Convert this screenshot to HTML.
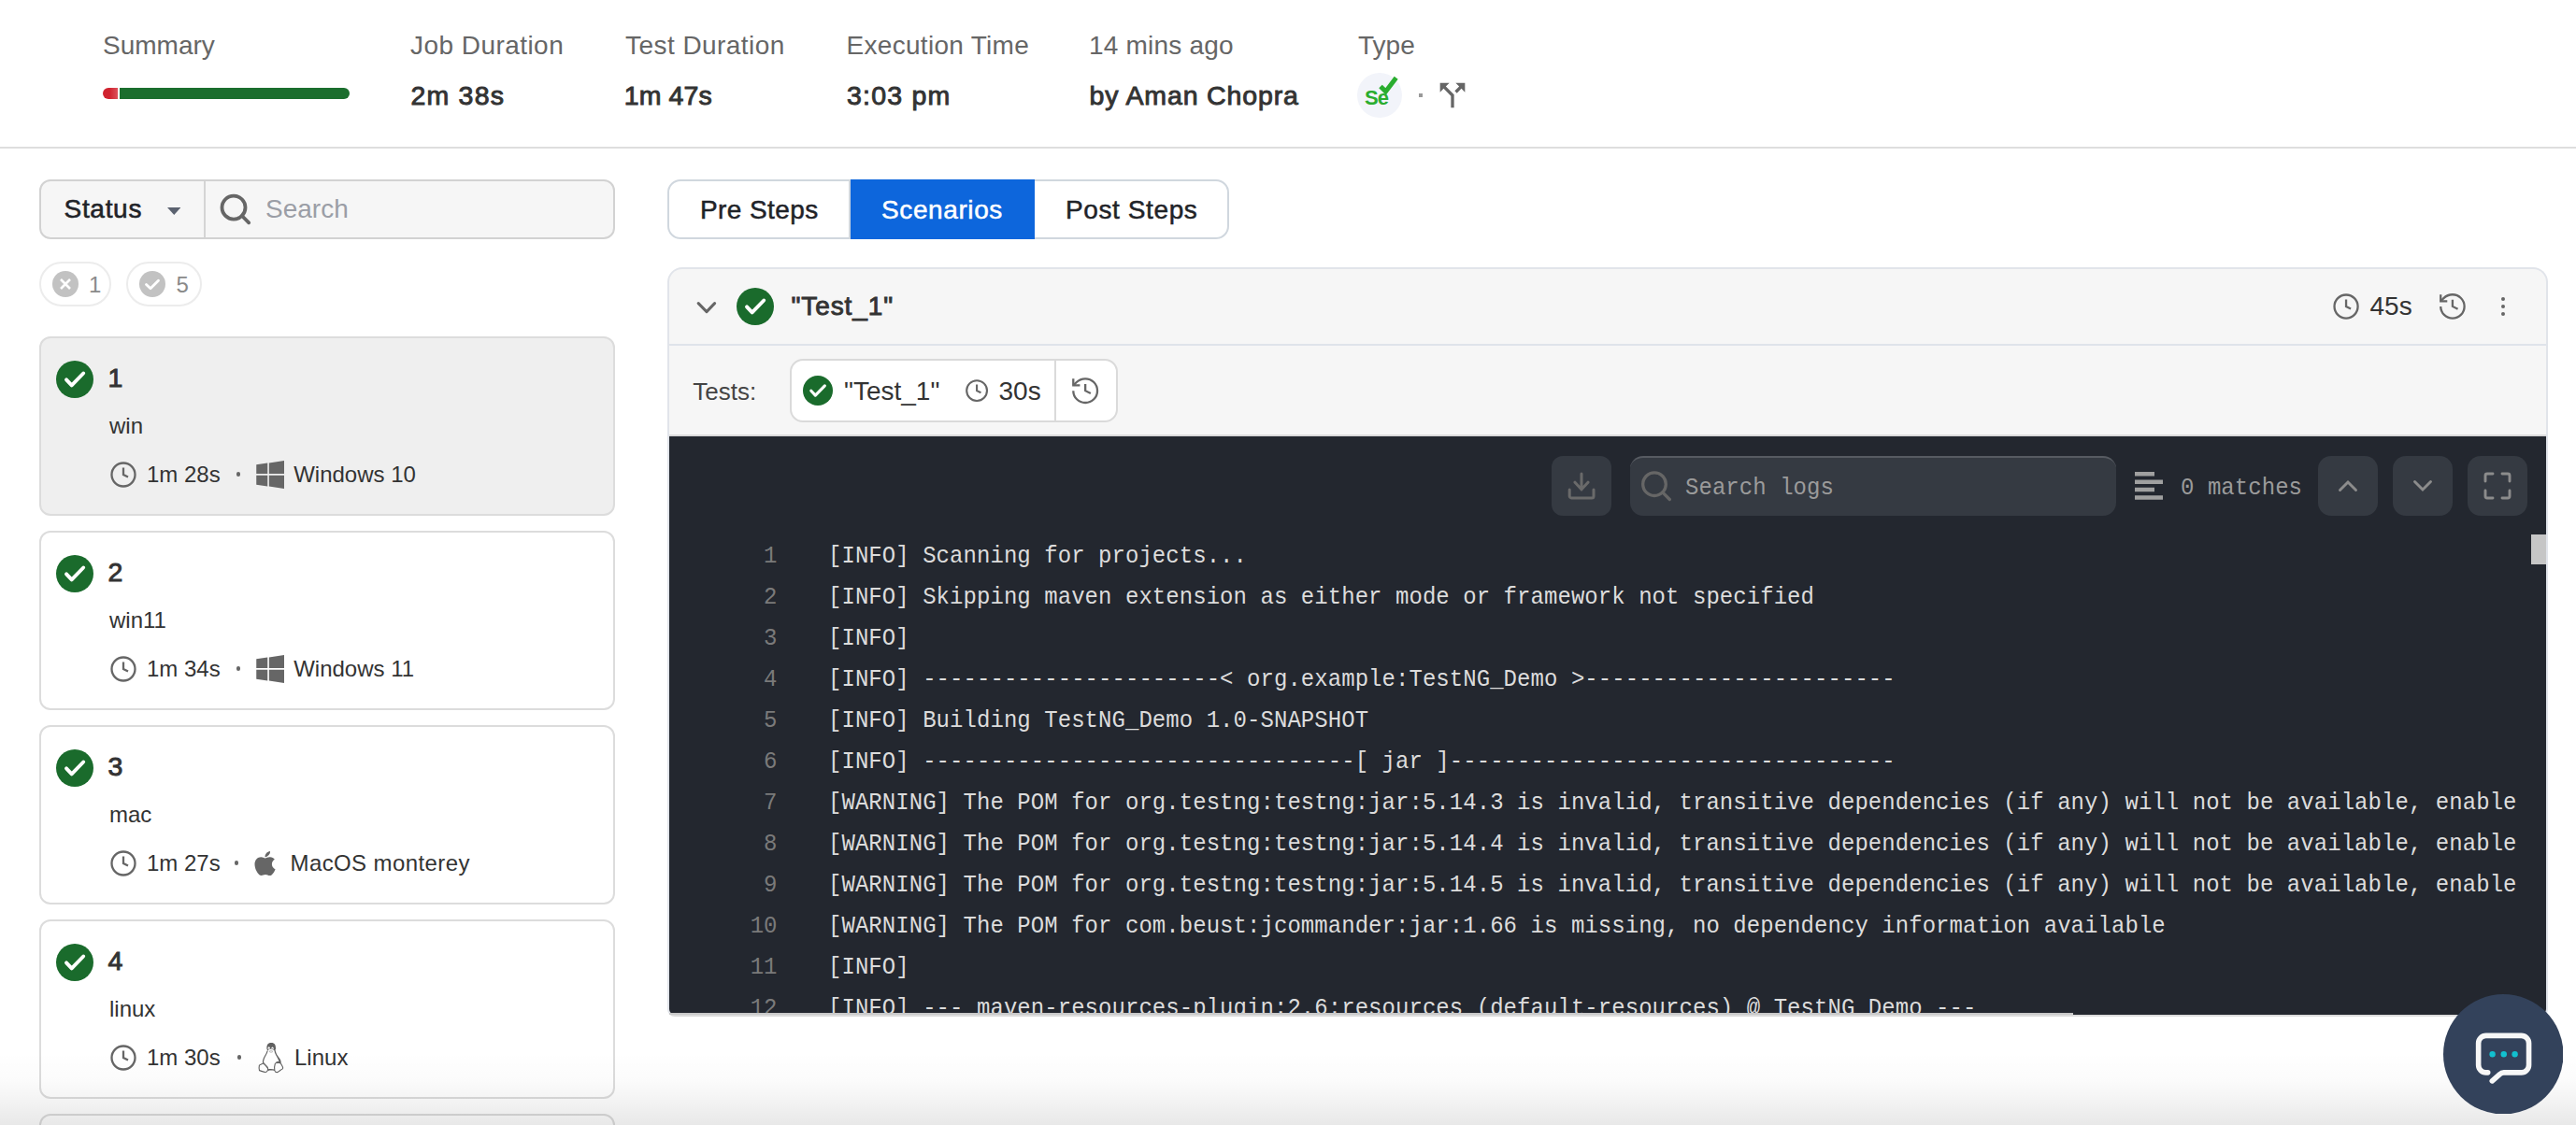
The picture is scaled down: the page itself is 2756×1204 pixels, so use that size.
<!DOCTYPE html><html><head><meta charset="utf-8"><style>html,body{margin:0;padding:0;background:#fff;width:2756px;height:1204px;overflow:hidden;position:relative;font-family:'Liberation Sans',sans-serif}</style></head><body>
<div style="position:absolute;left:110.00px;top:34.50px;font:400 28px/28px 'Liberation Sans', sans-serif;color:#666;white-space:pre;">Summary</div>
<div style="position:absolute;left:110px;top:94px;width:16px;height:12px;box-sizing:border-box;background:linear-gradient(to right,#d0232f 45%,#dc525c);border-radius:6px 0 0 6px"></div>
<div style="position:absolute;left:128px;top:94px;width:246px;height:12px;box-sizing:border-box;background:#1b6e2e;border-radius:0 6px 6px 0"></div>
<div style="position:absolute;left:439.00px;top:34.50px;font:400 28px/28px 'Liberation Sans', sans-serif;color:#666;white-space:pre;letter-spacing:0.45px">Job Duration</div>
<div style="position:absolute;left:439.50px;top:88.07px;font:400 28.5px/28.5px 'Liberation Sans', sans-serif;color:#333;white-space:pre;letter-spacing:1.2px;-webkit-text-stroke:0.95px #333">2m 38s</div>
<div style="position:absolute;left:669.00px;top:34.50px;font:400 28px/28px 'Liberation Sans', sans-serif;color:#666;white-space:pre;letter-spacing:0.45px">Test Duration</div>
<div style="position:absolute;left:667.80px;top:88.07px;font:400 28.5px/28.5px 'Liberation Sans', sans-serif;color:#333;white-space:pre;letter-spacing:0.1px;-webkit-text-stroke:0.95px #333">1m 47s</div>
<div style="position:absolute;left:905.50px;top:34.50px;font:400 28px/28px 'Liberation Sans', sans-serif;color:#666;white-space:pre;letter-spacing:0.3px">Execution Time</div>
<div style="position:absolute;left:906.00px;top:88.07px;font:400 28.5px/28.5px 'Liberation Sans', sans-serif;color:#333;white-space:pre;letter-spacing:1.2px;-webkit-text-stroke:0.95px #333">3:03 pm</div>
<div style="position:absolute;left:1165.00px;top:34.50px;font:400 28px/28px 'Liberation Sans', sans-serif;color:#666;white-space:pre;letter-spacing:0.2px">14 mins ago</div>
<div style="position:absolute;left:1165.50px;top:88.07px;font:400 28.5px/28.5px 'Liberation Sans', sans-serif;color:#333;white-space:pre;letter-spacing:0.85px;-webkit-text-stroke:0.95px #333">by Aman Chopra</div>
<div style="position:absolute;left:1453.00px;top:34.50px;font:400 28px/28px 'Liberation Sans', sans-serif;color:#666;white-space:pre;">Type</div>
<svg style="position:absolute;left:1452px;top:77.8px;" width="48" height="48" viewBox="0 0 48 48"><circle cx="24" cy="24" r="24" fill="#f2f4fa"/><path d="M25 14.5l5.5 5.4 11.2-14.6" fill="none" stroke="#2aad2f" stroke-width="5"/></svg>
<div style="position:absolute;left:1460.00px;top:93.78px;font:700 22px/22px 'Liberation Sans', sans-serif;color:#2aad2f;white-space:pre;letter-spacing:-1px">Se</div>
<div style="position:absolute;left:1518px;top:100px;width:4px;height:4px;box-sizing:border-box;background:#999"></div>
<svg style="position:absolute;left:1534px;top:82.4px;" width="40" height="40" viewBox="0 0 24 24"><path fill="#666" d="M14 4l2.29 2.29-2.88 2.88 1.42 1.42 2.88-2.88L20 10V4zm-4 0H4v6l2.29-2.29 4.71 4.7V20h2v-8.41l-5.29-5.3z"/></svg>
<div style="position:absolute;left:0px;top:157px;width:2756px;height:2px;box-sizing:border-box;background:#dedede"></div>
<div style="position:absolute;left:42px;top:192px;width:616px;height:64px;box-sizing:border-box;background:#f6f6f6;border:2px solid #d2d2d2;border-radius:12px"></div>
<div style="position:absolute;left:218px;top:194px;width:2px;height:60px;box-sizing:border-box;background:#d4d4d4"></div>
<div style="position:absolute;left:68.50px;top:210.30px;font:400 28px/28px 'Liberation Sans', sans-serif;color:#1f2328;white-space:pre;-webkit-text-stroke:0.6px #1f2328;letter-spacing:0.7px">Status</div>
<svg style="position:absolute;left:178.7px;top:222px;" width="14.5" height="8" viewBox="0 0 14.5 8"><path d="M0 0h14.5L7.25 8z" fill="#5b6270"/></svg>
<svg style="position:absolute;left:234px;top:206px;" width="36" height="36" viewBox="0 0 36 36"><circle cx="16" cy="16.1" r="12.5" fill="none" stroke="#666" stroke-width="3.8"/><path d="M24.9 25l7.3 7.3" stroke="#666" stroke-width="3.8" stroke-linecap="round"/></svg>
<div style="position:absolute;left:284.00px;top:210.30px;font:400 28px/28px 'Liberation Sans', sans-serif;color:#9b9ea6;white-space:pre;">Search</div>
<div style="position:absolute;left:42px;top:280px;width:77px;height:48px;box-sizing:border-box;border:2px solid #ececec;border-radius:24px"></div>
<div style="position:absolute;left:135px;top:280px;width:81px;height:48px;box-sizing:border-box;border:2px solid #ececec;border-radius:24px"></div>
<svg style="position:absolute;left:56px;top:290px;" width="28" height="28" viewBox="0 0 28 28"><circle cx="14" cy="14" r="14" fill="#c2c2c2"/><path d="M9 9l10 10M19 9L9 19" stroke="#fff" stroke-width="2.6"/></svg>
<div style="position:absolute;left:95.00px;top:292.88px;font:400 24px/24px 'Liberation Sans', sans-serif;color:#8a8a8a;white-space:pre;">1</div>
<svg style="position:absolute;left:149px;top:290px;" width="28" height="28" viewBox="0 0 28 28"><circle cx="14" cy="14" r="14" fill="#c2c2c2"/><path d="M7.5 14.5l4.5 4.3 8.5-8.5" fill="none" stroke="#fff" stroke-width="2.8" stroke-linejoin="round" stroke-linecap="round"/></svg>
<div style="position:absolute;left:188.50px;top:292.88px;font:400 24px/24px 'Liberation Sans', sans-serif;color:#8a8a8a;white-space:pre;">5</div>
<div style="position:absolute;left:42px;top:360px;width:616px;height:192px;box-sizing:border-box;background:#efefef;border:2px solid #dcdcdc;border-radius:12px"></div>
<svg style="position:absolute;left:60.0px;top:386.0px;" width="40" height="40" viewBox="0 0 40 40"><circle cx="20" cy="20" r="20" fill="#1a6b2c"/><path d="M11 20.3L16.7 26.4L29.2 13.5" fill="none" stroke="#fff" stroke-width="3.9" stroke-linecap="round" stroke-linejoin="round"/></svg>
<div style="position:absolute;left:115.50px;top:390.07px;font:400 28.5px/28.5px 'Liberation Sans', sans-serif;color:#333;white-space:pre;-webkit-text-stroke:0.95px #333">1</div>
<div style="position:absolute;left:117.00px;top:444.48px;font:400 24px/24px 'Liberation Sans', sans-serif;color:#333;white-space:pre;">win</div>
<svg style="position:absolute;left:116.9px;top:492.7px;" width="30.0" height="30.0" viewBox="0 0 24 24"><circle cx="12" cy="12" r="10" fill="none" stroke="#666" stroke-width="1.840"/><path d="M12 6v6l4 2" fill="none" stroke="#666" stroke-width="1.840" stroke-linecap="butt" stroke-linejoin="miter"/></svg>
<div style="position:absolute;left:157.00px;top:496.28px;font:400 24px/24px 'Liberation Sans', sans-serif;color:#333;white-space:pre;">1m 28s</div>
<div style="position:absolute;left:252.6px;top:505.3px;width:4.8px;height:4.8px;box-sizing:border-box;background:#666;border-radius:50%"></div>
<svg style="position:absolute;left:273.7px;top:493px;" width="30.5" height="30" viewBox="0 0 30 30"><path fill="#666" d="M0 4.3L12 2.6V14H0zM13.6 2.4L30 0V14H13.6zM0 15.8H12V27.4L0 25.7zM13.6 15.8H30V30L13.6 27.6z"/></svg>
<div style="position:absolute;left:314.20px;top:496.28px;font:400 24px/24px 'Liberation Sans', sans-serif;color:#333;white-space:pre;">Windows 10</div>
<div style="position:absolute;left:42px;top:568px;width:616px;height:192px;box-sizing:border-box;background:#fff;border:2px solid #dcdcdc;border-radius:12px"></div>
<svg style="position:absolute;left:60.0px;top:594.0px;" width="40" height="40" viewBox="0 0 40 40"><circle cx="20" cy="20" r="20" fill="#1a6b2c"/><path d="M11 20.3L16.7 26.4L29.2 13.5" fill="none" stroke="#fff" stroke-width="3.9" stroke-linecap="round" stroke-linejoin="round"/></svg>
<div style="position:absolute;left:115.50px;top:598.07px;font:400 28.5px/28.5px 'Liberation Sans', sans-serif;color:#333;white-space:pre;-webkit-text-stroke:0.95px #333">2</div>
<div style="position:absolute;left:117.00px;top:652.48px;font:400 24px/24px 'Liberation Sans', sans-serif;color:#333;white-space:pre;">win11</div>
<svg style="position:absolute;left:116.9px;top:700.7px;" width="30.0" height="30.0" viewBox="0 0 24 24"><circle cx="12" cy="12" r="10" fill="none" stroke="#666" stroke-width="1.840"/><path d="M12 6v6l4 2" fill="none" stroke="#666" stroke-width="1.840" stroke-linecap="butt" stroke-linejoin="miter"/></svg>
<div style="position:absolute;left:157.00px;top:704.28px;font:400 24px/24px 'Liberation Sans', sans-serif;color:#333;white-space:pre;">1m 34s</div>
<div style="position:absolute;left:252.6px;top:713.3px;width:4.8px;height:4.8px;box-sizing:border-box;background:#666;border-radius:50%"></div>
<svg style="position:absolute;left:273.7px;top:701px;" width="30.5" height="30" viewBox="0 0 30 30"><path fill="#666" d="M0 4.3L12 2.6V14H0zM13.6 2.4L30 0V14H13.6zM0 15.8H12V27.4L0 25.7zM13.6 15.8H30V30L13.6 27.6z"/></svg>
<div style="position:absolute;left:314.20px;top:704.28px;font:400 24px/24px 'Liberation Sans', sans-serif;color:#333;white-space:pre;">Windows 11</div>
<div style="position:absolute;left:42px;top:776px;width:616px;height:192px;box-sizing:border-box;background:#fff;border:2px solid #dcdcdc;border-radius:12px"></div>
<svg style="position:absolute;left:60.0px;top:802.0px;" width="40" height="40" viewBox="0 0 40 40"><circle cx="20" cy="20" r="20" fill="#1a6b2c"/><path d="M11 20.3L16.7 26.4L29.2 13.5" fill="none" stroke="#fff" stroke-width="3.9" stroke-linecap="round" stroke-linejoin="round"/></svg>
<div style="position:absolute;left:115.50px;top:806.07px;font:400 28.5px/28.5px 'Liberation Sans', sans-serif;color:#333;white-space:pre;-webkit-text-stroke:0.95px #333">3</div>
<div style="position:absolute;left:117.00px;top:860.48px;font:400 24px/24px 'Liberation Sans', sans-serif;color:#333;white-space:pre;">mac</div>
<svg style="position:absolute;left:116.9px;top:908.7px;" width="30.0" height="30.0" viewBox="0 0 24 24"><circle cx="12" cy="12" r="10" fill="none" stroke="#666" stroke-width="1.840"/><path d="M12 6v6l4 2" fill="none" stroke="#666" stroke-width="1.840" stroke-linecap="butt" stroke-linejoin="miter"/></svg>
<div style="position:absolute;left:157.00px;top:912.28px;font:400 24px/24px 'Liberation Sans', sans-serif;color:#333;white-space:pre;">1m 27s</div>
<div style="position:absolute;left:250.6px;top:921.3px;width:4.8px;height:4.8px;box-sizing:border-box;background:#666;border-radius:50%"></div>
<svg style="position:absolute;left:271.9px;top:909px;overflow:visible" width="23" height="30" viewBox="0 0 384 512"><path fill="#666" d="M318.7 268.7c-.2-36.7 16.4-64.4 50-84.8-18.8-26.9-47.2-41.7-84.7-44.6-35.5-2.8-74.3 20.7-88.5 20.7-15 0-49.4-19.7-76.4-19.7C63.3 141.2 4 184.8 4 273.5q0 39.3 14.4 81.2c12.8 36.7 59 126.7 107.2 125.2 25.2-.6 43-17.9 75.8-17.9 31.8 0 48.3 17.9 76.4 17.9 48.6-.7 90.4-82.5 102.6-119.3-65.2-30.7-61.7-90-61.7-91.9zm-56.6-164.2c27.3-32.4 24.8-61.9 24-72.5-24.1 1.4-52 16.4-67.9 34.9-17.5 19.8-27.8 44.3-25.6 71.9 26.1 2 49.9-11.4 69.5-34.3z"/></svg>
<div style="position:absolute;left:310.50px;top:912.28px;font:400 24px/24px 'Liberation Sans', sans-serif;color:#333;white-space:pre;letter-spacing:0.4px">MacOS monterey</div>
<div style="position:absolute;left:42px;top:984px;width:616px;height:192px;box-sizing:border-box;background:#fff;border:2px solid #dcdcdc;border-radius:12px"></div>
<svg style="position:absolute;left:60.0px;top:1010.0px;" width="40" height="40" viewBox="0 0 40 40"><circle cx="20" cy="20" r="20" fill="#1a6b2c"/><path d="M11 20.3L16.7 26.4L29.2 13.5" fill="none" stroke="#fff" stroke-width="3.9" stroke-linecap="round" stroke-linejoin="round"/></svg>
<div style="position:absolute;left:115.50px;top:1014.07px;font:400 28.5px/28.5px 'Liberation Sans', sans-serif;color:#333;white-space:pre;-webkit-text-stroke:0.95px #333">4</div>
<div style="position:absolute;left:117.00px;top:1068.48px;font:400 24px/24px 'Liberation Sans', sans-serif;color:#333;white-space:pre;">linux</div>
<svg style="position:absolute;left:116.9px;top:1116.7px;" width="30.0" height="30.0" viewBox="0 0 24 24"><circle cx="12" cy="12" r="10" fill="none" stroke="#666" stroke-width="1.840"/><path d="M12 6v6l4 2" fill="none" stroke="#666" stroke-width="1.840" stroke-linecap="butt" stroke-linejoin="miter"/></svg>
<div style="position:absolute;left:157.00px;top:1120.28px;font:400 24px/24px 'Liberation Sans', sans-serif;color:#333;white-space:pre;">1m 30s</div>
<div style="position:absolute;left:253.6px;top:1129.3px;width:4.8px;height:4.8px;box-sizing:border-box;background:#666;border-radius:50%"></div>
<svg style="position:absolute;left:270px;top:1110px;" width="40" height="42" viewBox="0 0 40 42"><path d="M15.5 13C15 8.5 16.5 6 20.2 6C24 6 25.2 8.5 25 13L23.5 14.5C22.5 13 21.5 12.5 20.5 13.2C19.5 12.5 18 12.8 16.5 14.5Z" fill="#606060"/><ellipse cx="17.7" cy="11.8" rx="1.2" ry="1.6" fill="#fff"/><ellipse cx="21.5" cy="12" rx="1.2" ry="1.6" fill="#fff"/><circle cx="18" cy="12.3" r=".55" fill="#606060"/><circle cx="21.3" cy="12.5" r=".55" fill="#606060"/><path d="M18 15.2C19 14.4 21 14.4 22 15.3C21.2 16.6 18.8 16.6 18 15.2Z" fill="#fff" stroke="#999" stroke-width=".6"/><path d="M16.2 14.5C15.6 18 12.6 21 11.9 24C11.3 26 11.4 27.3 11.6 28" fill="none" stroke="#606060" stroke-width="1.2"/><path d="M24.5 13.5C25 17 27 20 29 22.5C30.5 24.5 30.8 26 30.6 27.5L28.8 27C28 24 26.2 21 24.8 18.5C23.9 17 23.5 15.5 23.5 14Z" fill="#606060"/><path d="M11.8 27.6L16.5 32.8" stroke="#606060" stroke-width="1.4"/><path d="M7.4 30.2C8.5 29.2 10.5 28.8 11.6 27.8C13.5 29.5 15.5 31.3 16.6 33.5C17 35 15.8 37.3 14 37.5C12 37.5 9.8 36.3 7.5 35.6C7 33.5 7.1 31.5 7.4 30.2Z" fill="#fff" stroke="#606060" stroke-width="1.1"/><path d="M24.3 28.5C25.5 27 27.5 26.3 28.5 26.8C30 27.3 30.8 28.5 31.2 29.5C31.6 30.5 32.6 31.5 32.7 33C32.7 34 31.5 34.5 30.5 35C29 35.8 28 37.5 26.2 37.6C25 37.6 24 36.8 23.8 35.5C23.5 33 23.6 30.5 24.3 28.5Z" fill="#fff" stroke="#606060" stroke-width="1.1"/><path d="M26 27.6C27 26.8 28.5 26.6 29.8 27.8" fill="none" stroke="#606060" stroke-width="1.6"/><path d="M16.6 34.3C19 33.8 21.5 33.8 23.8 34.6L23.9 36C21.5 35.4 19 35.4 17 35.9Z" fill="#606060"/></svg>
<div style="position:absolute;left:315.00px;top:1120.28px;font:400 24px/24px 'Liberation Sans', sans-serif;color:#333;white-space:pre;">Linux</div>
<div style="position:absolute;left:42px;top:1192px;width:616px;height:192px;box-sizing:border-box;background:#fff;border:2px solid #dcdcdc;border-radius:12px"></div>
<div style="position:absolute;left:714px;top:192px;width:601px;height:64px;box-sizing:border-box;border:2px solid #d0d7de;border-radius:14px;overflow:hidden"></div>
<div style="position:absolute;left:910px;top:192px;width:197px;height:64px;box-sizing:border-box;background:#0d66dc"></div>
<div style="position:absolute;left:908px;top:194px;width:2px;height:60px;box-sizing:border-box;background:#d0d7de"></div>
<div style="position:absolute;left:749.00px;top:211.10px;font:400 28px/28px 'Liberation Sans', sans-serif;color:#1f2328;white-space:pre;-webkit-text-stroke:0.5px #1f2328;letter-spacing:0.4px">Pre Steps</div>
<div style="position:absolute;left:943.00px;top:211.10px;font:400 28px/28px 'Liberation Sans', sans-serif;color:#fff;white-space:pre;-webkit-text-stroke:0.5px #fff;letter-spacing:0.6px">Scenarios</div>
<div style="position:absolute;left:1140.00px;top:211.10px;font:400 28px/28px 'Liberation Sans', sans-serif;color:#1f2328;white-space:pre;-webkit-text-stroke:0.5px #1f2328;letter-spacing:0.6px">Post Steps</div>
<div style="position:absolute;left:714px;top:286px;width:2012px;height:802px;box-sizing:border-box;background:#f6f6f6;border:2px solid #e1e4ea;border-bottom-color:#dcdcdc;border-radius:16px 16px 8px 8px;overflow:hidden"></div>
<div style="position:absolute;left:716px;top:367.5px;width:2008px;height:2px;box-sizing:border-box;background:#dfe3ea"></div>
<svg style="position:absolute;left:744px;top:320px;" width="24" height="16" viewBox="0 0 24 16"><path d="M3.2 4.6L12 13.6L20.6 4.6" fill="none" stroke="#666" stroke-width="3" stroke-linecap="round" stroke-linejoin="round"/></svg>
<svg style="position:absolute;left:788.0px;top:307.6px;" width="40" height="40" viewBox="0 0 40 40"><circle cx="20" cy="20" r="20" fill="#1a6b2c"/><path d="M11 20.3L16.7 26.4L29.2 13.5" fill="none" stroke="#fff" stroke-width="3.9" stroke-linecap="round" stroke-linejoin="round"/></svg>
<div style="position:absolute;left:846.50px;top:314.30px;font:400 28px/28px 'Liberation Sans', sans-serif;color:#333;white-space:pre;letter-spacing:0.9px;-webkit-text-stroke:0.9px #333">"Test_1"</div>
<svg style="position:absolute;left:2494.745454545455px;top:312.94545454545454px;" width="30.10909090909091" height="30.10909090909091" viewBox="0 0 24 24"><circle cx="12" cy="12" r="10" fill="none" stroke="#666" stroke-width="1.833"/><path d="M12 6v6l4 2" fill="none" stroke="#666" stroke-width="1.833" stroke-linecap="butt" stroke-linejoin="miter"/></svg>
<div style="position:absolute;left:2535.50px;top:313.80px;font:400 28px/28px 'Liberation Sans', sans-serif;color:#333;white-space:pre;">45s</div>
<svg style="position:absolute;left:2607.08px;top:311.08px;" width="33.839999999999996" height="33.839999999999996" viewBox="0 0 24 24"><path d="M3 12a9 9 0 1 0 9-9 9.75 9.75 0 0 0-6.74 2.74L3 8" fill="none" stroke="#666" stroke-width="1.631"/><path d="M3 3v5h5" fill="none" stroke="#666" stroke-width="1.631"/><path d="M12 7v5l4 2" fill="none" stroke="#666" stroke-width="1.631"/></svg>
<div style="position:absolute;left:2675.5px;top:317.59999999999997px;width:4.6px;height:4.6px;box-sizing:border-box;background:#666;border-radius:50%"></div>
<div style="position:absolute;left:2675.5px;top:325.59999999999997px;width:4.6px;height:4.6px;box-sizing:border-box;background:#666;border-radius:50%"></div>
<div style="position:absolute;left:2675.5px;top:333.59999999999997px;width:4.6px;height:4.6px;box-sizing:border-box;background:#666;border-radius:50%"></div>
<div style="position:absolute;left:741.30px;top:405.59px;font:400 26px/26px 'Liberation Sans', sans-serif;color:#444;white-space:pre;">Tests:</div>
<div style="position:absolute;left:845px;top:384px;width:351px;height:68px;box-sizing:border-box;background:#fff;border:2px solid #dadada;border-radius:14px"></div>
<div style="position:absolute;left:1128px;top:386px;width:2px;height:64px;box-sizing:border-box;background:#dadada"></div>
<svg style="position:absolute;left:859.0px;top:402.0px;" width="32" height="32" viewBox="0 0 40 40"><circle cx="20" cy="20" r="20" fill="#1a6b2c"/><path d="M11 20.3L16.7 26.4L29.2 13.5" fill="none" stroke="#fff" stroke-width="3.9" stroke-linecap="round" stroke-linejoin="round"/></svg>
<div style="position:absolute;left:903.00px;top:404.90px;font:400 28px/28px 'Liberation Sans', sans-serif;color:#333;white-space:pre;">"Test_1"</div>
<svg style="position:absolute;left:1031.709090909091px;top:404.90909090909093px;" width="26.18181818181818" height="26.18181818181818" viewBox="0 0 24 24"><circle cx="12" cy="12" r="10" fill="none" stroke="#666" stroke-width="1.925"/><path d="M12 6v6l4 2" fill="none" stroke="#666" stroke-width="1.925" stroke-linecap="butt" stroke-linejoin="miter"/></svg>
<div style="position:absolute;left:1068.50px;top:404.90px;font:400 28px/28px 'Liberation Sans', sans-serif;color:#333;white-space:pre;">30s</div>
<svg style="position:absolute;left:1144.34px;top:400.84px;" width="34.32000000000001" height="34.32000000000001" viewBox="0 0 24 24"><path d="M3 12a9 9 0 1 0 9-9 9.75 9.75 0 0 0-6.74 2.74L3 8" fill="none" stroke="#666" stroke-width="1.608"/><path d="M3 3v5h5" fill="none" stroke="#666" stroke-width="1.608"/><path d="M12 7v5l4 2" fill="none" stroke="#666" stroke-width="1.608"/></svg>
<div style="position:absolute;left:716px;top:465px;width:2008px;height:2px;box-sizing:border-box;background:#dadada"></div>
<div style="position:absolute;left:716px;top:467px;width:2008px;height:619px;box-sizing:border-box;background:#23272f;border-radius:0 0 6px 6px"></div>
<div style="position:absolute;left:1660px;top:488px;width:64px;height:64px;box-sizing:border-box;background:#353a42;border-radius:12px"></div>
<svg style="position:absolute;left:1676px;top:504px;" width="32" height="32" viewBox="0 0 32 32"><path d="M16 3v17M9 12.2l7 7.6 7-7.6M3.2 20v6.9a2 2 0 0 0 2 2H27a2 2 0 0 0 2-2V20" fill="none" stroke="#6a6a6a" stroke-width="3" stroke-linecap="round" stroke-linejoin="round"/></svg>
<div style="position:absolute;left:1744px;top:488px;width:520px;height:64px;box-sizing:border-box;background:#353a42;border-radius:14px;border-top:2px solid #575b62"></div>
<svg style="position:absolute;left:1754px;top:504px;" width="36" height="36" viewBox="0 0 36 36"><circle cx="16" cy="14.2" r="12.3" fill="none" stroke="#666" stroke-width="3.3"/><path d="M24.7 22.9l7.6 7.6" stroke="#666" stroke-width="3.3" stroke-linecap="round"/></svg>
<div style="position:absolute;left:1803.00px;top:510.60px;font:400 24px/24px 'Liberation Mono', monospace;color:#9b9b9b;white-space:pre;letter-spacing:0.05px;transform:scaleY(1.06);transform-origin:0 18.4px">Search logs</div>
<svg style="position:absolute;left:2284px;top:505px;" width="30" height="30" viewBox="0 0 30 30"><path d="M0 2.25h21M0 10.85h30M0 19.05h21M0 27.55h30" stroke="#a0a0a0" stroke-width="4.5"/></svg>
<div style="position:absolute;left:2333.00px;top:510.60px;font:400 24px/24px 'Liberation Mono', monospace;color:#9b9b9b;white-space:pre;letter-spacing:0.05px;transform:scaleY(1.06);transform-origin:0 18.4px">0 matches</div>
<div style="position:absolute;left:2480px;top:488px;width:64px;height:64px;box-sizing:border-box;background:#353a42;border-radius:14px"></div>
<div style="position:absolute;left:2560px;top:488px;width:64px;height:64px;box-sizing:border-box;background:#353a42;border-radius:14px"></div>
<div style="position:absolute;left:2640px;top:488px;width:64px;height:64px;box-sizing:border-box;background:#353a42;border-radius:14px"></div>
<svg style="position:absolute;left:2496px;top:504px;" width="32" height="32" viewBox="0 0 32 32"><path d="M7.5 20.5l8.5-8.5 8.5 8.5" fill="none" stroke="#8c8c8c" stroke-width="2.9" stroke-linecap="round"/></svg>
<svg style="position:absolute;left:2576px;top:504px;" width="32" height="32" viewBox="0 0 32 32"><path d="M7.5 11.5l8.5 8.5 8.5-8.5" fill="none" stroke="#8c8c8c" stroke-width="2.9" stroke-linecap="round"/></svg>
<svg style="position:absolute;left:2656px;top:504px;" width="32" height="32" viewBox="0 0 32 32"><path d="M3 11V5a2 2 0 0 1 2-2H11M21 3H27a2 2 0 0 1 2 2V11M29 21V27a2 2 0 0 1-2 2H21M11 29H5a2 2 0 0 1-2-2V21" fill="none" stroke="#8c8c8c" stroke-width="2.9" stroke-linecap="round"/></svg>
<div style="position:absolute;left:716px;top:560px;width:2008px;height:525px;overflow:hidden">
<div style="position:absolute;right:1892.5px;top:23.60px;font:400 24px/24px 'Liberation Mono', monospace;color:#7a7a7a;white-space:pre;transform:scaleY(1.06);transform-origin:0 18.4px">1</div>
<div style="position:absolute;left:170px;top:23.60px;font:400 24px/24px 'Liberation Mono', monospace;color:#dcdcdc;white-space:pre;letter-spacing:0.05px;transform:scaleY(1.06);transform-origin:0 18.4px">[INFO] Scanning for projects...</div>
<div style="position:absolute;right:1892.5px;top:67.60px;font:400 24px/24px 'Liberation Mono', monospace;color:#7a7a7a;white-space:pre;transform:scaleY(1.06);transform-origin:0 18.4px">2</div>
<div style="position:absolute;left:170px;top:67.60px;font:400 24px/24px 'Liberation Mono', monospace;color:#dcdcdc;white-space:pre;letter-spacing:0.05px;transform:scaleY(1.06);transform-origin:0 18.4px">[INFO] Skipping maven extension as either mode or framework not specified</div>
<div style="position:absolute;right:1892.5px;top:111.60px;font:400 24px/24px 'Liberation Mono', monospace;color:#7a7a7a;white-space:pre;transform:scaleY(1.06);transform-origin:0 18.4px">3</div>
<div style="position:absolute;left:170px;top:111.60px;font:400 24px/24px 'Liberation Mono', monospace;color:#dcdcdc;white-space:pre;letter-spacing:0.05px;transform:scaleY(1.06);transform-origin:0 18.4px">[INFO]</div>
<div style="position:absolute;right:1892.5px;top:155.60px;font:400 24px/24px 'Liberation Mono', monospace;color:#7a7a7a;white-space:pre;transform:scaleY(1.06);transform-origin:0 18.4px">4</div>
<div style="position:absolute;left:170px;top:155.60px;font:400 24px/24px 'Liberation Mono', monospace;color:#dcdcdc;white-space:pre;letter-spacing:0.05px;transform:scaleY(1.06);transform-origin:0 18.4px">[INFO] ----------------------&lt; org.example:TestNG_Demo &gt;-----------------------</div>
<div style="position:absolute;right:1892.5px;top:199.60px;font:400 24px/24px 'Liberation Mono', monospace;color:#7a7a7a;white-space:pre;transform:scaleY(1.06);transform-origin:0 18.4px">5</div>
<div style="position:absolute;left:170px;top:199.60px;font:400 24px/24px 'Liberation Mono', monospace;color:#dcdcdc;white-space:pre;letter-spacing:0.05px;transform:scaleY(1.06);transform-origin:0 18.4px">[INFO] Building TestNG_Demo 1.0-SNAPSHOT</div>
<div style="position:absolute;right:1892.5px;top:243.60px;font:400 24px/24px 'Liberation Mono', monospace;color:#7a7a7a;white-space:pre;transform:scaleY(1.06);transform-origin:0 18.4px">6</div>
<div style="position:absolute;left:170px;top:243.60px;font:400 24px/24px 'Liberation Mono', monospace;color:#dcdcdc;white-space:pre;letter-spacing:0.05px;transform:scaleY(1.06);transform-origin:0 18.4px">[INFO] --------------------------------[ jar ]---------------------------------</div>
<div style="position:absolute;right:1892.5px;top:287.60px;font:400 24px/24px 'Liberation Mono', monospace;color:#7a7a7a;white-space:pre;transform:scaleY(1.06);transform-origin:0 18.4px">7</div>
<div style="position:absolute;left:170px;top:287.60px;font:400 24px/24px 'Liberation Mono', monospace;color:#dcdcdc;white-space:pre;letter-spacing:0.05px;transform:scaleY(1.06);transform-origin:0 18.4px">[WARNING] The POM for org.testng:testng:jar:5.14.3 is invalid, transitive dependencies (if any) will not be available, enable</div>
<div style="position:absolute;right:1892.5px;top:331.60px;font:400 24px/24px 'Liberation Mono', monospace;color:#7a7a7a;white-space:pre;transform:scaleY(1.06);transform-origin:0 18.4px">8</div>
<div style="position:absolute;left:170px;top:331.60px;font:400 24px/24px 'Liberation Mono', monospace;color:#dcdcdc;white-space:pre;letter-spacing:0.05px;transform:scaleY(1.06);transform-origin:0 18.4px">[WARNING] The POM for org.testng:testng:jar:5.14.4 is invalid, transitive dependencies (if any) will not be available, enable</div>
<div style="position:absolute;right:1892.5px;top:375.60px;font:400 24px/24px 'Liberation Mono', monospace;color:#7a7a7a;white-space:pre;transform:scaleY(1.06);transform-origin:0 18.4px">9</div>
<div style="position:absolute;left:170px;top:375.60px;font:400 24px/24px 'Liberation Mono', monospace;color:#dcdcdc;white-space:pre;letter-spacing:0.05px;transform:scaleY(1.06);transform-origin:0 18.4px">[WARNING] The POM for org.testng:testng:jar:5.14.5 is invalid, transitive dependencies (if any) will not be available, enable</div>
<div style="position:absolute;right:1892.5px;top:419.60px;font:400 24px/24px 'Liberation Mono', monospace;color:#7a7a7a;white-space:pre;transform:scaleY(1.06);transform-origin:0 18.4px">10</div>
<div style="position:absolute;left:170px;top:419.60px;font:400 24px/24px 'Liberation Mono', monospace;color:#dcdcdc;white-space:pre;letter-spacing:0.05px;transform:scaleY(1.06);transform-origin:0 18.4px">[WARNING] The POM for com.beust:jcommander:jar:1.66 is missing, no dependency information available</div>
<div style="position:absolute;right:1892.5px;top:463.60px;font:400 24px/24px 'Liberation Mono', monospace;color:#7a7a7a;white-space:pre;transform:scaleY(1.06);transform-origin:0 18.4px">11</div>
<div style="position:absolute;left:170px;top:463.60px;font:400 24px/24px 'Liberation Mono', monospace;color:#dcdcdc;white-space:pre;letter-spacing:0.05px;transform:scaleY(1.06);transform-origin:0 18.4px">[INFO]</div>
<div style="position:absolute;right:1892.5px;top:507.60px;font:400 24px/24px 'Liberation Mono', monospace;color:#7a7a7a;white-space:pre;transform:scaleY(1.06);transform-origin:0 18.4px">12</div>
<div style="position:absolute;left:170px;top:507.60px;font:400 24px/24px 'Liberation Mono', monospace;color:#dcdcdc;white-space:pre;letter-spacing:0.05px;transform:scaleY(1.06);transform-origin:0 18.4px">[INFO] --- maven-resources-plugin:2.6:resources (default-resources) @ TestNG_Demo ---</div>
</div>
<div style="position:absolute;left:2708px;top:572px;width:16px;height:32px;box-sizing:border-box;background:#c6c6c6"></div>
<div style="position:absolute;left:716px;top:1084px;width:1502px;height:2px;box-sizing:border-box;background:#c9c9c9"></div>
<div style="position:absolute;left:0px;top:1126px;width:2756px;height:78px;box-sizing:border-box;background:linear-gradient(to bottom, rgba(0,0,0,0) 0%, rgba(0,0,0,0.015) 40%, rgba(0,0,0,0.05) 70%, rgba(0,0,0,0.09) 100%)"></div>
<svg style="position:absolute;left:2613.5px;top:1063.5px;" width="128.5" height="128.5" viewBox="0 0 128 128"><circle cx="64" cy="64" r="64" fill="#33425b"/><path d="M47.5 83.5H45.5a8 8 0 0 1-8-8V52.2a8 8 0 0 1 8-8H83.2a8 8 0 0 1 8 8V75.5a8 8 0 0 1-8 8H64.5q-2.5 0-4.2 1.8L52.1 92.5" fill="none" stroke="#f7f7f7" stroke-width="5.6" stroke-linecap="round" stroke-linejoin="round"/><circle cx="52.4" cy="64" r="3.2" fill="#12c0cf"/><circle cx="64.5" cy="64" r="3.2" fill="#12c0cf"/><circle cx="76.3" cy="64" r="3.2" fill="#12c0cf"/></svg>
</body></html>
